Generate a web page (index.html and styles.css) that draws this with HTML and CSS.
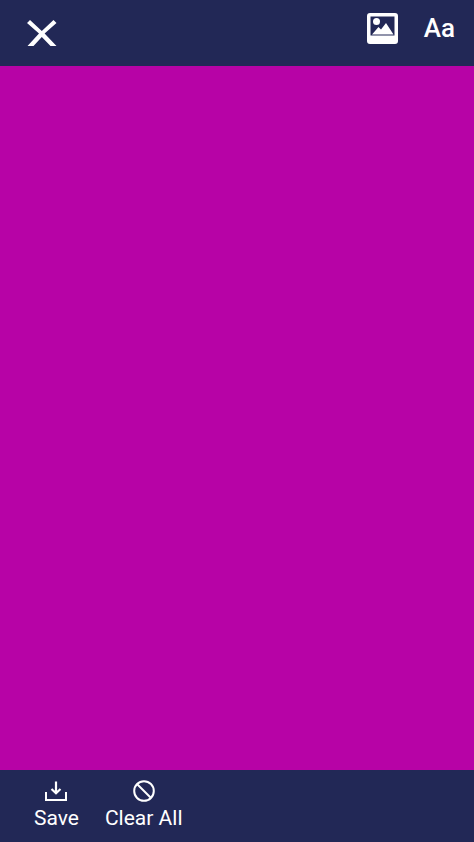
FILE: index.html
```html
<!DOCTYPE html>
<html lang="en">

<head>
  <meta charset="utf-8">
  <meta name="viewport" content="width=device-width, initial-scale=1">
  <title>Editor</title>
  <link rel="stylesheet" href="styles.css">
</head>

<body>
  <header class="topbar">
    <button type="button" class="close" aria-label="Close">
      <svg width="30" height="26" viewBox="0 0 30 26">
        <path d="M0 3 L3 0 L14.800 11 L26.500 0 L29.500 3 L17.600 13.600 L29.500 26 H23.500 L14.800 17 L6.500 26 H0.500 L12 13.600 Z" fill="#fff"/>
      </svg>
    </button>
    <div class="tools">
      <button type="button" aria-label="Image">
        <svg width="31" height="31" viewBox="0 0 31 31">
          <path fill="#fff" fill-rule="evenodd" d="M3 0 H28 Q31 0 31 3 V28 Q31 31 28 31 H3 Q0 31 0 28 V3 Q0 0 3 0 Z M3.500 3.500 V22.500 H27.500 V3.500 Z"/>
          <circle cx="9.500" cy="8.500" r="3.500" fill="#fff"/>
          <path fill="#fff" d="M5 21.500 L11.500 14 L14 16.500 L19 10 L26.500 21.500 Z"/>
        </svg>
      </button>
      <button type="button" class="text-tool">Aa</button>
    </div>
  </header>

  <main class="canvas"></main>

  <footer class="bottombar">
    <button type="button" class="action">
      <svg width="22" height="22" viewBox="0 0 22 22" fill="none" stroke="#fff" stroke-width="2">
        <path d="M1 12 V20 H21 V12"/>
        <path d="M11 1.500 V13 M6.500 9 L11 13.200 L15.500 9" stroke-width="2.200"/>
      </svg>
      Save
    </button>
    <button type="button" class="action">
      <svg width="22" height="22" viewBox="0 0 22 22" fill="none" stroke="#fff" stroke-width="2">
        <circle cx="11" cy="11" r="9.800"/>
        <path d="M4 4 L18 18"/>
      </svg>
      Clear All
    </button>
  </footer>
</body>

</html>
```

FILE: styles.css
```css
* {
    box-sizing: border-box;
}
body {
    margin: 0;
    min-height: 100vh;
    display: flex;
    flex-direction: column;
    font-family: Roboto, "Liberation Sans", sans-serif;
    color: #fff;
    background-color: #222856;
}
button {
    padding: 0;
    border: 0;
    background: none;
    color: inherit;
    font: inherit;
    cursor: pointer;
}
svg {
    display: block;
}
.topbar {
    display: flex;
    justify-content: space-between;
    align-items: flex-start;
    height: 66px;
    padding: 0 19px 0 27px;
}
.close {
    padding-top: 20px;
}
.tools {
    display: flex;
    align-items: center;
    gap: 26px;
    padding-top: 13px;
}
.text-tool {
    font-size: 26px;
    font-weight: 500;
    line-height: 31px;
}
.canvas {
    flex: 1;
    background-color: #b703a6;
}
.bottombar {
    display: flex;
    align-items: flex-start;
    gap: 26px;
    height: 72px;
    padding: 10px 34px;
}
.action {
    display: flex;
    flex-direction: column;
    align-items: center;
    gap: 4px;
    font-size: 21px;
    line-height: 24px;
}
```
